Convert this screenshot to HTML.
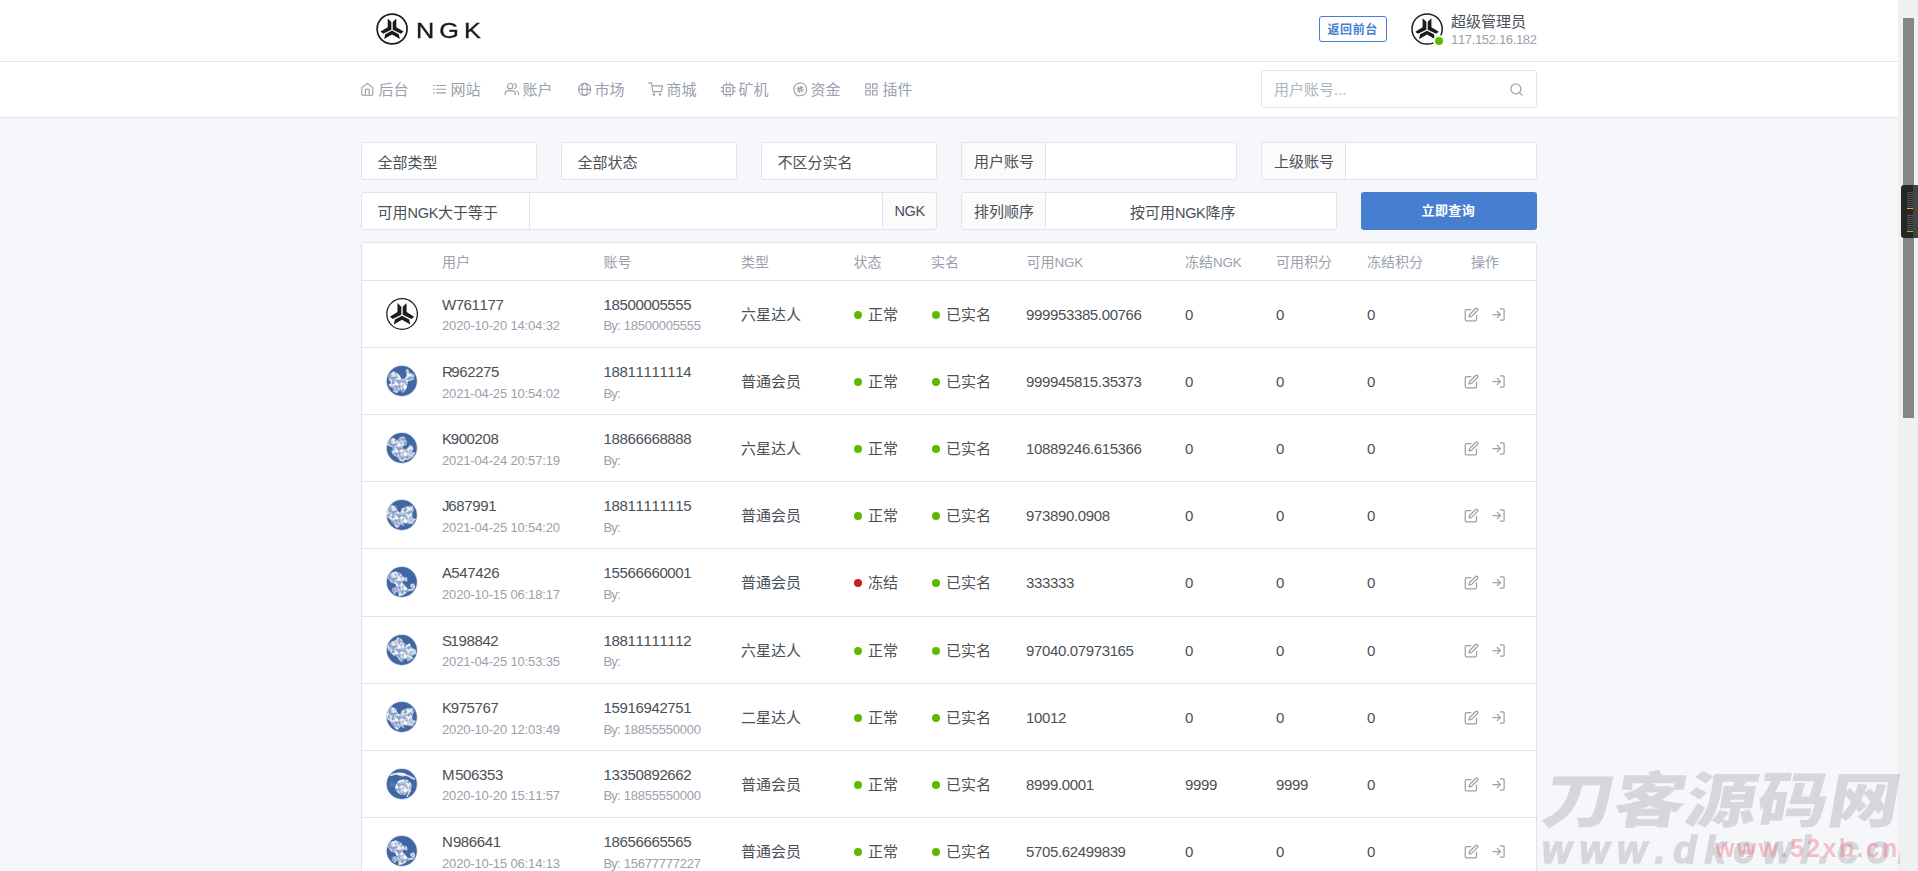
<!DOCTYPE html>
<html lang="zh-CN"><head><meta charset="utf-8"><title>NGK</title>
<style>
*{box-sizing:border-box;margin:0;padding:0}
html,body{width:1918px;height:871px;overflow:hidden}
body{position:relative;background:#f5f7fb;color:#495057;
 font-family:"Liberation Sans","Noto Sans CJK SC",sans-serif;font-size:15px;line-height:1;
 -webkit-font-smoothing:antialiased;font-kerning:none}
.abs,.t{position:absolute;white-space:nowrap}
.t{line-height:1}
.m{color:#9aa0ac}
#hdr{position:absolute;left:0;top:0;width:1898px;height:62px;background:#fff;border-bottom:1px solid #e0e5ec}
#nav{position:absolute;left:0;top:62px;width:1898px;height:56px;background:#fff;border-bottom:1px solid #e0e5ec}
.box{position:absolute;background:#fff;border:1px solid #e0e5ec;border-radius:3px}
.lab{position:absolute;background:#fbfbfc;border:1px solid #e0e5ec}
.ic{position:absolute;fill:none;stroke:#9aa0ac;stroke-width:1.6;stroke-linecap:round;stroke-linejoin:round;overflow:visible}
.ic.fe{stroke-width:2}
.ic.nvi{stroke-width:1.15}
.dot{position:absolute;width:8px;height:8px;border-radius:50%;background:#5eba00}
.dot.r{background:#cd201f}
.hl{position:absolute;left:362px;width:1174px;height:1px;background:#e0e5ec}
.l{font-size:14.5px;letter-spacing:-.35px}.l14{font-size:13.5px;letter-spacing:-.3px}.d{letter-spacing:-.36px}.d2{letter-spacing:-.23px}
</style></head>
<body>
<svg width="0" height="0" style="position:absolute"><defs><filter id="nz" x="0" y="0" width="100%" height="100%" color-interpolation-filters="sRGB"><feTurbulence type="fractalNoise" baseFrequency=".33" numOctaves="2" seed="7" result="n"/><feColorMatrix in="n" type="matrix" values="0 0 0 0 1  0 0 0 0 1  0 0 0 0 1  0 0 0 2.5 -0.82" result="a"/><feComposite in="a" in2="SourceGraphic" operator="in"/></filter></defs></svg>
<div id="hdr"></div>
<div id="nav"></div>
<svg class="abs" style="left:376px;top:13px" width="32" height="32" viewBox="0 0 32 32">
<circle cx="16.1" cy="16" r="14.95" fill="#fff" stroke="#1c1c1c" stroke-width="1.7"/>
<g fill="#1c1c1c" transform="translate(16.05 16) scale(1) translate(-16.05 -16)">
<path d="M11.7 5.5 L15.35 9 V16.8 L7.1 20.7 L4.5 18.6 L11.7 14.2 Z"/>
<path d="M20.35 5.5 L16.7 9 V16.8 L24.95 20.7 L27.55 18.6 L20.35 14.2 Z"/>
<path d="M16.02 17.6 L22.8 21.2 L23.9 26.1 L16.02 21.5 L8.15 26.1 L9.25 21.2 Z"/>
</g></svg>
<div class="t" id="brand" style="left:416px;top:19.5px;font-size:22.5px;color:#1a1a1a;-webkit-text-stroke:.35px #1a1a1a;letter-spacing:4.5px;transform:scaleX(1.12);transform-origin:0 0">NGK</div>
<div class="abs" style="left:1319px;top:16px;width:68px;height:26px;border:1px solid #467fcf;border-radius:3px;background:#fff"></div>
<div class="t " style="left:1327.5px;top:23.7px;font-size:12px;color:#467fcf;font-weight:700;letter-spacing:.6px">返回前台</div>
<svg class="abs" style="left:1411px;top:13px" width="32" height="32" viewBox="0 0 32 32">
<circle cx="16.1" cy="16" r="15.1" fill="#fff" stroke="#1c1c1c" stroke-width="1.5"/>
<g fill="#1c1c1c" transform="translate(16.05 16) scale(1.02) translate(-16.05 -16)">
<path d="M11.7 5.5 L15.35 9 V16.8 L7.1 20.7 L4.5 18.6 L11.7 14.2 Z"/>
<path d="M20.35 5.5 L16.7 9 V16.8 L24.95 20.7 L27.55 18.6 L20.35 14.2 Z"/>
<path d="M16.02 17.6 L22.8 21.2 L23.9 26.1 L16.02 21.5 L8.15 26.1 L9.25 21.2 Z"/>
</g></svg>
<div class="abs" style="left:1433px;top:35px;width:12px;height:12px;border-radius:50%;background:#5eba00;border:2px solid #fff"></div>
<div class="t " style="left:1451px;top:14px;font-size:15px;">超级管理员</div>
<div class="t m" style="left:1451px;top:33px;font-size:13px;letter-spacing:-.34px">117.152.16.182</div>
<svg class="ic nvi" style="left:360px;top:82px" width="16" height="15" viewBox="0 0 16 15"><path d="M1.8 5.6 L7.3 1.5 L12.8 5.6 V12.4 Q12.8 13.2 12 13.2 H2.6 Q1.8 13.2 1.8 12.4 Z"/><path d="M5.4 13 V7.4 H9.2 V13"/></svg>
<div class="t m" style="left:378.5px;top:82px;font-size:15px;">后台</div>
<svg class="ic nvi" style="left:432px;top:82px" width="16" height="15" viewBox="0 0 16 15"><path d="M4.8 3.5 H13.6 M4.8 7.2 H13.6 M4.8 10.8 H13.6"/><path d="M1.6 3.5 H2.4 M1.6 7.2 H2.4 M1.6 10.8 H2.4"/></svg>
<div class="t m" style="left:450.5px;top:82px;font-size:15px;">网站</div>
<svg class="ic nvi" style="left:504px;top:82px" width="16" height="15" viewBox="0 0 16 15"><circle cx="6.2" cy="4.2" r="2.7"/><path d="M1.2 12.6 V11.6 Q1.2 8.8 4 8.8 H8.4 Q11.2 8.8 11.2 11.6 V12.6"/><path d="M10.4 1.6 Q12.4 2.2 12.4 4.2 Q12.4 6.2 10.4 6.8"/><path d="M12.6 9 Q14.6 9.6 14.6 11.6 V12.6"/></svg>
<div class="t m" style="left:522.5px;top:82px;font-size:15px;">账户</div>
<svg class="ic nvi" style="left:576px;top:82px" width="16" height="15" viewBox="0 0 16 15"><circle cx="8.6" cy="7.4" r="6"/><path d="M2.6 7.4 H14.6"/><ellipse cx="8.6" cy="7.4" rx="2.6" ry="6"/></svg>
<div class="t m" style="left:594.5px;top:82px;font-size:15px;">市场</div>
<svg class="ic nvi" style="left:648px;top:82px" width="16" height="15" viewBox="0 0 16 15"><path d="M0.8 0.9 H2.9 Q3.5 0.9 3.6 1.5 L4.8 9.6 H13.2 L14.6 3.8 H4"/><circle cx="5.9" cy="12.4" r="0.7"/><circle cx="12.1" cy="12.4" r="0.7"/></svg>
<div class="t m" style="left:666.5px;top:82px;font-size:15px;">商城</div>
<svg class="ic nvi" style="left:720px;top:82px" width="16" height="15" viewBox="0 0 16 15"><rect x="3.4" y="2.8" width="9.6" height="9.6" rx="1"/><rect x="6.2" y="5.6" width="4" height="4"/><path d="M6.4 0.8 V2.8 M10 0.8 V2.8 M6.4 12.4 V14.4 M10 12.4 V14.4 M1.2 5.6 H3.4 M1.2 9.4 H3.4 M13 5.6 H15.2 M13 9.4 H15.2"/></svg>
<div class="t m" style="left:738.5px;top:82px;font-size:15px;">矿机</div>
<svg class="ic nvi" style="left:792px;top:82px" width="16" height="15" viewBox="0 0 16 15"><rect x="2" y="1.2" width="12.4" height="12.4" rx="5.3" transform="rotate(-12 8.2 7.4)"/><g transform="rotate(-12 8.2 7.4)"><path d="M7 4.4 V10.4 M9.4 4.4 V10.4 M5.2 6.2 H11.2 M5.2 8.6 H11.2"/></g></svg>
<div class="t m" style="left:810.5px;top:82px;font-size:15px;">资金</div>
<svg class="ic nvi" style="left:864px;top:82px" width="16" height="15" viewBox="0 0 16 15"><rect x="1.8" y="1.8" width="4.4" height="4.4"/><rect x="8.6" y="1.8" width="4.4" height="4.4"/><rect x="1.8" y="8.6" width="4.4" height="4.4"/><rect x="8.6" y="8.6" width="4.4" height="4.4"/></svg>
<div class="t m" style="left:882.5px;top:82px;font-size:15px;">插件</div>
<div class="box" style="left:1261px;top:70px;width:276px;height:38px"></div>
<div class="t " style="left:1274px;top:82px;font-size:15px;color:#adb5bd">用户账号...</div>
<svg class="ic fe" style="left:1509px;top:82px" width="15" height="15" viewBox="0 0 24 24"><circle cx="11" cy="11" r="8"/><path d="M21 21 L16.65 16.65"/></svg>
<div class="box" style="left:361px;top:142px;width:176px;height:38px;"></div>
<div class="t " style="left:377.6px;top:154.8px;font-size:15px;">全部类型</div>
<div class="box" style="left:561px;top:142px;width:176px;height:38px;"></div>
<div class="t " style="left:577.6px;top:154.8px;font-size:15px;">全部状态</div>
<div class="box" style="left:761px;top:142px;width:176px;height:38px;"></div>
<div class="t " style="left:777.6px;top:154.8px;font-size:15px;">不区分实名</div>
<div class="box" style="left:961px;top:142px;width:276px;height:38px;"></div>
<div class="lab" style="left:961px;top:142px;width:85px;height:38px;border-radius:3px 0 0 3px"></div>
<div class="t " style="left:974px;top:154px;font-size:15px;">用户账号</div>
<div class="box" style="left:1261px;top:142px;width:276px;height:38px;"></div>
<div class="lab" style="left:1261px;top:142px;width:85px;height:38px;border-radius:3px 0 0 3px"></div>
<div class="t " style="left:1274px;top:154px;font-size:15px;">上级账号</div>
<div class="box" style="left:361px;top:192px;width:576px;height:38px;"></div>
<div class="abs" style="left:529px;top:192px;width:1px;height:38px;background:#e0e5ec"></div>
<div class="t " style="left:377.6px;top:204.8px;font-size:15px;">可用<span class="l">NGK</span>大于等于</div>
<div class="lab" style="left:882px;top:192px;width:55px;height:38px;border-radius:0 3px 3px 0"></div>
<div class="t " style="left:894.5px;top:204.3px;font-size:14.5px;letter-spacing:-.35px">NGK</div>
<div class="box" style="left:961px;top:192px;width:376px;height:38px;"></div>
<div class="lab" style="left:961px;top:192px;width:85px;height:38px;border-radius:3px 0 0 3px"></div>
<div class="t " style="left:974px;top:204px;font-size:15px;">排列顺序</div>
<div class="t " style="left:1130px;top:205px;font-size:15px;">按可用<span class="l">NGK</span>降序</div>
<div class="abs" style="left:1361px;top:192px;width:176px;height:38px;background:#467fcf;border-radius:3px"></div>
<div class="t " style="left:1421.5px;top:204px;font-size:13px;color:#fff;font-weight:700;letter-spacing:.39px">立即查询</div>
<div class="box" style="left:361px;top:242px;width:1176px;height:700px;border-radius:3px 3px 0 0;box-shadow:0 1px 2px 0 rgba(0,0,0,.05)"></div>
<div class="t m" style="left:442px;top:254.5px;font-size:14px;">用户</div>
<div class="t m" style="left:603.5px;top:254.5px;font-size:14px;">账号</div>
<div class="t m" style="left:741px;top:254.5px;font-size:14px;">类型</div>
<div class="t m" style="left:853.5px;top:254.5px;font-size:14px;">状态</div>
<div class="t m" style="left:931px;top:254.5px;font-size:14px;">实名</div>
<div class="t m" style="left:1026.5px;top:254.5px;font-size:14px;">可用<span class="l14">NGK</span></div>
<div class="t m" style="left:1185px;top:254.5px;font-size:14px;">冻结<span class="l14">NGK</span></div>
<div class="t m" style="left:1276px;top:254.5px;font-size:14px;">可用积分</div>
<div class="t m" style="left:1367px;top:254.5px;font-size:14px;">冻结积分</div>
<div class="t m" style="left:1471px;top:254.5px;font-size:14px;">操作</div>
<div class="hl" style="top:280px"></div>
<div class="hl" style="top:347px"></div>
<div class="hl" style="top:414px"></div>
<div class="hl" style="top:481px"></div>
<div class="hl" style="top:548px"></div>
<div class="hl" style="top:616px"></div>
<div class="hl" style="top:683px"></div>
<div class="hl" style="top:750px"></div>
<div class="hl" style="top:817px"></div>
<svg class="abs" style="left:386px;top:298px" width="32" height="32" viewBox="0 0 32 32">
<circle cx="16.1" cy="16" r="15.3" fill="#fff" stroke="#1c1c1c" stroke-width="1.25"/>
<g fill="#1c1c1c" transform="translate(16.05 16) scale(1.05) translate(-16.05 -16)">
<path d="M11.7 5.5 L15.35 9 V16.8 L7.1 20.7 L4.5 18.6 L11.7 14.2 Z"/>
<path d="M20.35 5.5 L16.7 9 V16.8 L24.95 20.7 L27.55 18.6 L20.35 14.2 Z"/>
<path d="M16.02 17.6 L22.8 21.2 L23.9 26.1 L16.02 21.5 L8.15 26.1 L9.25 21.2 Z"/>
</g></svg>
<div class="t d" style="left:442px;top:297px;font-size:15px;"><span style="letter-spacing:-0.52px">W</span>761177</div>
<div class="t m" style="left:442px;top:319px;font-size:13px;letter-spacing:-.15px">2020-10-20 14:04:32</div>
<div class="t d" style="left:603.5px;top:297px;font-size:15px;">18500005555</div>
<div class="t m d2" style="left:603.5px;top:319px;font-size:13px;word-spacing:.5px"><span style="letter-spacing:-.8px">By:</span> 18500005555</div>
<div class="t " style="left:741px;top:307.4px;font-size:15px;">六星达人</div>
<div class="dot" style="left:854px;top:311px"></div>
<div class="t " style="left:868px;top:307.4px;font-size:15px;">正常</div>
<div class="dot" style="left:931.5px;top:311px"></div>
<div class="t " style="left:946px;top:307.4px;font-size:15px;">已实名</div>
<div class="t d" style="left:1026px;top:306.5px;font-size:15px;">999953385.00766</div>
<div class="t d" style="left:1185px;top:306.5px;font-size:15px;">0</div>
<div class="t d" style="left:1276px;top:306.5px;font-size:15px;">0</div>
<div class="t d" style="left:1367px;top:306.5px;font-size:15px;">0</div>
<svg class="ic fe" style="left:1463.5px;top:307.2px" width="15" height="15" viewBox="0 0 24 24"><path d="M11 4H4a2 2 0 0 0-2 2v14a2 2 0 0 0 2 2h14a2 2 0 0 0 2-2v-7"/><path d="M18.5 2.5a2.121 2.121 0 0 1 3 3L12 15l-4 1 1-4 9.5-9.5z"/></svg>
<svg class="ic fe" style="left:1490.7px;top:307.2px" width="15" height="15" viewBox="0 0 24 24"><path d="M15 3h4a2 2 0 0 1 2 2v14a2 2 0 0 1-2 2h-4"/><path d="M10 17l5-5-5-5"/><path d="M15 12H3"/></svg>
<svg class="abs" style="left:386px;top:365px" width="32" height="32" viewBox="0 0 32 32"><defs><clipPath id="c365"><circle cx="15.8" cy="16" r="15"/></clipPath></defs><circle cx="15.8" cy="16" r="15.7" fill="#c9d4e8"/><circle cx="15.8" cy="16" r="15" fill="#4066a4"/><g clip-path="url(#c365)"><path d="M2.9 9.8 L7.5 6.6 L13 9.3 L15.7 14.4 L19 13.5 L20.8 9.8 L19.9 5.2 L21.7 4.3 L23.6 7.9 L28.1 9.8 L27.7 14.4 L21.7 16.2 L20.8 21.7 L19.4 25.4 L16.2 27.7 L14.4 24.5 L11.2 27.7 L7.5 26.8 L7 23.6 L4.3 21.7 L2.9 19.9 L5.2 17.6 L2.9 14.4 Z" fill="#fff" fill-opacity=".36" stroke="#fff" stroke-opacity=".36" stroke-width=".8" stroke-linejoin="round"/><path d="M2.9 9.8 L7.5 6.6 L13 9.3 L15.7 14.4 L19 13.5 L20.8 9.8 L19.9 5.2 L21.7 4.3 L23.6 7.9 L28.1 9.8 L27.7 14.4 L21.7 16.2 L20.8 21.7 L19.4 25.4 L16.2 27.7 L14.4 24.5 L11.2 27.7 L7.5 26.8 L7 23.6 L4.3 21.7 L2.9 19.9 L5.2 17.6 L2.9 14.4 Z" fill="#fff" filter="url(#nz)"/></g></svg>
<div class="t d" style="left:442px;top:364px;font-size:15px;"><span style="letter-spacing:-1.66px">R</span>962275</div>
<div class="t m" style="left:442px;top:387px;font-size:13px;letter-spacing:-.15px">2021-04-25 10:54:02</div>
<div class="t d" style="left:603.5px;top:364px;font-size:15px;">18811111114</div>
<div class="t m d2" style="left:603.5px;top:387px;font-size:13px;word-spacing:.5px"><span style="letter-spacing:-.8px">By:</span> </div>
<div class="t " style="left:741px;top:374.4px;font-size:15px;">普通会员</div>
<div class="dot" style="left:854px;top:378px"></div>
<div class="t " style="left:868px;top:374.4px;font-size:15px;">正常</div>
<div class="dot" style="left:931.5px;top:378px"></div>
<div class="t " style="left:946px;top:374.4px;font-size:15px;">已实名</div>
<div class="t d" style="left:1026px;top:373.5px;font-size:15px;">999945815.35373</div>
<div class="t d" style="left:1185px;top:373.5px;font-size:15px;">0</div>
<div class="t d" style="left:1276px;top:373.5px;font-size:15px;">0</div>
<div class="t d" style="left:1367px;top:373.5px;font-size:15px;">0</div>
<svg class="ic fe" style="left:1463.5px;top:374.2px" width="15" height="15" viewBox="0 0 24 24"><path d="M11 4H4a2 2 0 0 0-2 2v14a2 2 0 0 0 2 2h14a2 2 0 0 0 2-2v-7"/><path d="M18.5 2.5a2.121 2.121 0 0 1 3 3L12 15l-4 1 1-4 9.5-9.5z"/></svg>
<svg class="ic fe" style="left:1490.7px;top:374.2px" width="15" height="15" viewBox="0 0 24 24"><path d="M15 3h4a2 2 0 0 1 2 2v14a2 2 0 0 1-2 2h-4"/><path d="M10 17l5-5-5-5"/><path d="M15 12H3"/></svg>
<svg class="abs" style="left:386px;top:432px" width="32" height="32" viewBox="0 0 32 32"><defs><clipPath id="c432"><circle cx="15.8" cy="16" r="15"/></clipPath></defs><circle cx="15.8" cy="16" r="15.7" fill="#c9d4e8"/><circle cx="15.8" cy="16" r="15" fill="#4066a4"/><g clip-path="url(#c432)"><path d="M1.05 13 L3.3 7.9 L7.5 6.1 L11.2 8.9 L13.9 5.2 L18 4.7 L20.8 9.8 L19.9 13 L17.1 13.5 L16.2 16.2 L19.9 17.6 L21.7 16.2 L23.6 13 L26.3 13.9 L27.2 17.1 L25.4 19.9 L29.1 20.8 L28.1 24.5 L21.7 27.7 L19 27.2 L17.1 30 L13.5 28.1 L11.6 25.4 L7 22.6 L5.6 19 L7.5 15.7 L4.3 14.4 Z" fill="#fff" fill-opacity=".36" stroke="#fff" stroke-opacity=".36" stroke-width=".8" stroke-linejoin="round"/><path d="M1.05 13 L3.3 7.9 L7.5 6.1 L11.2 8.9 L13.9 5.2 L18 4.7 L20.8 9.8 L19.9 13 L17.1 13.5 L16.2 16.2 L19.9 17.6 L21.7 16.2 L23.6 13 L26.3 13.9 L27.2 17.1 L25.4 19.9 L29.1 20.8 L28.1 24.5 L21.7 27.7 L19 27.2 L17.1 30 L13.5 28.1 L11.6 25.4 L7 22.6 L5.6 19 L7.5 15.7 L4.3 14.4 Z" fill="#fff" filter="url(#nz)"/></g></svg>
<div class="t d" style="left:442px;top:431px;font-size:15px;"><span style="letter-spacing:-1.36px">K</span>900208</div>
<div class="t m" style="left:442px;top:454px;font-size:13px;letter-spacing:-.15px">2021-04-24 20:57:19</div>
<div class="t d" style="left:603.5px;top:431px;font-size:15px;">18866668888</div>
<div class="t m d2" style="left:603.5px;top:454px;font-size:13px;word-spacing:.5px"><span style="letter-spacing:-.8px">By:</span> </div>
<div class="t " style="left:741px;top:441.4px;font-size:15px;">六星达人</div>
<div class="dot" style="left:854px;top:445px"></div>
<div class="t " style="left:868px;top:441.4px;font-size:15px;">正常</div>
<div class="dot" style="left:931.5px;top:445px"></div>
<div class="t " style="left:946px;top:441.4px;font-size:15px;">已实名</div>
<div class="t d" style="left:1026px;top:440.5px;font-size:15px;">10889246.615366</div>
<div class="t d" style="left:1185px;top:440.5px;font-size:15px;">0</div>
<div class="t d" style="left:1276px;top:440.5px;font-size:15px;">0</div>
<div class="t d" style="left:1367px;top:440.5px;font-size:15px;">0</div>
<svg class="ic fe" style="left:1463.5px;top:441.2px" width="15" height="15" viewBox="0 0 24 24"><path d="M11 4H4a2 2 0 0 0-2 2v14a2 2 0 0 0 2 2h14a2 2 0 0 0 2-2v-7"/><path d="M18.5 2.5a2.121 2.121 0 0 1 3 3L12 15l-4 1 1-4 9.5-9.5z"/></svg>
<svg class="ic fe" style="left:1490.7px;top:441.2px" width="15" height="15" viewBox="0 0 24 24"><path d="M15 3h4a2 2 0 0 1 2 2v14a2 2 0 0 1-2 2h-4"/><path d="M10 17l5-5-5-5"/><path d="M15 12H3"/></svg>
<svg class="abs" style="left:386px;top:499px" width="32" height="32" viewBox="0 0 32 32"><defs><clipPath id="c499"><circle cx="15.8" cy="16" r="15"/></clipPath></defs><circle cx="15.8" cy="16" r="15.7" fill="#c9d4e8"/><circle cx="15.8" cy="16" r="15" fill="#4066a4"/><g clip-path="url(#c499)"><path d="M0.4 14.4 L2 8.9 L5.2 6.3 L9.8 7.5 L11.2 11.6 L14.4 14.4 L15.7 9.8 L20.8 7.5 L26.3 7 L27.7 10.7 L25.9 15.3 L26.3 19 L30 20.3 L28.1 22.2 L27.2 24.9 L21.7 24.5 L17.6 23.6 L18 26.8 L14.4 25.4 L11.6 29.1 L9.8 27.7 L6.1 23.6 L4.3 19.9 L1.05 17.6 Z" fill="#fff" fill-opacity=".36" stroke="#fff" stroke-opacity=".36" stroke-width=".8" stroke-linejoin="round"/><path d="M0.4 14.4 L2 8.9 L5.2 6.3 L9.8 7.5 L11.2 11.6 L14.4 14.4 L15.7 9.8 L20.8 7.5 L26.3 7 L27.7 10.7 L25.9 15.3 L26.3 19 L30 20.3 L28.1 22.2 L27.2 24.9 L21.7 24.5 L17.6 23.6 L18 26.8 L14.4 25.4 L11.6 29.1 L9.8 27.7 L6.1 23.6 L4.3 19.9 L1.05 17.6 Z" fill="#fff" filter="url(#nz)"/></g></svg>
<div class="t d" style="left:442px;top:498px;font-size:15px;"><span style="letter-spacing:-1.26px">J</span>687991</div>
<div class="t m" style="left:442px;top:521px;font-size:13px;letter-spacing:-.15px">2021-04-25 10:54:20</div>
<div class="t d" style="left:603.5px;top:498px;font-size:15px;">18811111115</div>
<div class="t m d2" style="left:603.5px;top:521px;font-size:13px;word-spacing:.5px"><span style="letter-spacing:-.8px">By:</span> </div>
<div class="t " style="left:741px;top:508.4px;font-size:15px;">普通会员</div>
<div class="dot" style="left:854px;top:512px"></div>
<div class="t " style="left:868px;top:508.4px;font-size:15px;">正常</div>
<div class="dot" style="left:931.5px;top:512px"></div>
<div class="t " style="left:946px;top:508.4px;font-size:15px;">已实名</div>
<div class="t d" style="left:1026px;top:507.5px;font-size:15px;">973890.0908</div>
<div class="t d" style="left:1185px;top:507.5px;font-size:15px;">0</div>
<div class="t d" style="left:1276px;top:507.5px;font-size:15px;">0</div>
<div class="t d" style="left:1367px;top:507.5px;font-size:15px;">0</div>
<svg class="ic fe" style="left:1463.5px;top:508.2px" width="15" height="15" viewBox="0 0 24 24"><path d="M11 4H4a2 2 0 0 0-2 2v14a2 2 0 0 0 2 2h14a2 2 0 0 0 2-2v-7"/><path d="M18.5 2.5a2.121 2.121 0 0 1 3 3L12 15l-4 1 1-4 9.5-9.5z"/></svg>
<svg class="ic fe" style="left:1490.7px;top:508.2px" width="15" height="15" viewBox="0 0 24 24"><path d="M15 3h4a2 2 0 0 1 2 2v14a2 2 0 0 1-2 2h-4"/><path d="M10 17l5-5-5-5"/><path d="M15 12H3"/></svg>
<svg class="abs" style="left:386px;top:566px" width="32" height="32" viewBox="0 0 32 32"><defs><clipPath id="c566"><circle cx="15.8" cy="16" r="15"/></clipPath></defs><circle cx="15.8" cy="16" r="15.7" fill="#c9d4e8"/><circle cx="15.8" cy="16" r="15" fill="#4066a4"/><g clip-path="url(#c566)"><path d="M2 12.1 L3.8 7.5 L9.8 5.6 L15.3 7.9 L16.2 10.7 L20.8 11.6 L21.3 15.3 L17.6 14.4 L16.2 16.2 L19 19.9 L21.7 23.1 L27.2 23.1 L24.5 20.8 L24.5 18.5 L27.7 17.6 L29.1 20.3 L28.1 24 L21.7 25.4 L17.1 29.1 L13 30 L12.5 26.3 L9.8 25.4 L8.9 28.1 L6.1 25.4 L6.1 22.6 L10.7 20.8 L9.8 18 L5.2 16.2 Z" fill="#fff" fill-opacity=".36" stroke="#fff" stroke-opacity=".36" stroke-width=".8" stroke-linejoin="round"/><path d="M2 12.1 L3.8 7.5 L9.8 5.6 L15.3 7.9 L16.2 10.7 L20.8 11.6 L21.3 15.3 L17.6 14.4 L16.2 16.2 L19 19.9 L21.7 23.1 L27.2 23.1 L24.5 20.8 L24.5 18.5 L27.7 17.6 L29.1 20.3 L28.1 24 L21.7 25.4 L17.1 29.1 L13 30 L12.5 26.3 L9.8 25.4 L8.9 28.1 L6.1 25.4 L6.1 22.6 L10.7 20.8 L9.8 18 L5.2 16.2 Z" fill="#fff" filter="url(#nz)"/></g></svg>
<div class="t d" style="left:442px;top:565px;font-size:15px;"><span style="letter-spacing:-0.69px">A</span>547426</div>
<div class="t m" style="left:442px;top:588px;font-size:13px;letter-spacing:-.15px">2020-10-15 06:18:17</div>
<div class="t d" style="left:603.5px;top:565px;font-size:15px;">15566660001</div>
<div class="t m d2" style="left:603.5px;top:588px;font-size:13px;word-spacing:.5px"><span style="letter-spacing:-.8px">By:</span> </div>
<div class="t " style="left:741px;top:575.4px;font-size:15px;">普通会员</div>
<div class="dot r" style="left:854px;top:579px"></div>
<div class="t " style="left:868px;top:575.4px;font-size:15px;">冻结</div>
<div class="dot" style="left:931.5px;top:579px"></div>
<div class="t " style="left:946px;top:575.4px;font-size:15px;">已实名</div>
<div class="t d" style="left:1026px;top:574.5px;font-size:15px;">333333</div>
<div class="t d" style="left:1185px;top:574.5px;font-size:15px;">0</div>
<div class="t d" style="left:1276px;top:574.5px;font-size:15px;">0</div>
<div class="t d" style="left:1367px;top:574.5px;font-size:15px;">0</div>
<svg class="ic fe" style="left:1463.5px;top:575.2px" width="15" height="15" viewBox="0 0 24 24"><path d="M11 4H4a2 2 0 0 0-2 2v14a2 2 0 0 0 2 2h14a2 2 0 0 0 2-2v-7"/><path d="M18.5 2.5a2.121 2.121 0 0 1 3 3L12 15l-4 1 1-4 9.5-9.5z"/></svg>
<svg class="ic fe" style="left:1490.7px;top:575.2px" width="15" height="15" viewBox="0 0 24 24"><path d="M15 3h4a2 2 0 0 1 2 2v14a2 2 0 0 1-2 2h-4"/><path d="M10 17l5-5-5-5"/><path d="M15 12H3"/></svg>
<svg class="abs" style="left:386px;top:634px" width="32" height="32" viewBox="0 0 32 32"><defs><clipPath id="c634"><circle cx="15.8" cy="16" r="15"/></clipPath></defs><circle cx="15.8" cy="16" r="15.7" fill="#c9d4e8"/><circle cx="15.8" cy="16" r="15" fill="#4066a4"/><g clip-path="url(#c634)"><path d="M1.5 11.6 L5.2 7.9 L9.8 6.6 L11.6 3.3 L15.7 5.2 L17.6 9.3 L20.8 11.2 L23.6 9.3 L25.4 13.5 L30 16.2 L29.5 19.9 L25.4 21.7 L27.2 24.5 L21.7 27.2 L20.8 24.5 L17.1 25.4 L16.2 28.1 L13.5 26.3 L11.2 22.6 L6.6 20.8 L4.3 17.6 L2 16.2 Z" fill="#fff" fill-opacity=".36" stroke="#fff" stroke-opacity=".36" stroke-width=".8" stroke-linejoin="round"/><path d="M1.5 11.6 L5.2 7.9 L9.8 6.6 L11.6 3.3 L15.7 5.2 L17.6 9.3 L20.8 11.2 L23.6 9.3 L25.4 13.5 L30 16.2 L29.5 19.9 L25.4 21.7 L27.2 24.5 L21.7 27.2 L20.8 24.5 L17.1 25.4 L16.2 28.1 L13.5 26.3 L11.2 22.6 L6.6 20.8 L4.3 17.6 L2 16.2 Z" fill="#fff" filter="url(#nz)"/></g></svg>
<div class="t d" style="left:442px;top:633px;font-size:15px;"><span style="letter-spacing:-1.56px">S</span>198842</div>
<div class="t m" style="left:442px;top:655px;font-size:13px;letter-spacing:-.15px">2021-04-25 10:53:35</div>
<div class="t d" style="left:603.5px;top:633px;font-size:15px;">18811111112</div>
<div class="t m d2" style="left:603.5px;top:655px;font-size:13px;word-spacing:.5px"><span style="letter-spacing:-.8px">By:</span> </div>
<div class="t " style="left:741px;top:643.4px;font-size:15px;">六星达人</div>
<div class="dot" style="left:854px;top:647px"></div>
<div class="t " style="left:868px;top:643.4px;font-size:15px;">正常</div>
<div class="dot" style="left:931.5px;top:647px"></div>
<div class="t " style="left:946px;top:643.4px;font-size:15px;">已实名</div>
<div class="t d" style="left:1026px;top:642.5px;font-size:15px;">97040.07973165</div>
<div class="t d" style="left:1185px;top:642.5px;font-size:15px;">0</div>
<div class="t d" style="left:1276px;top:642.5px;font-size:15px;">0</div>
<div class="t d" style="left:1367px;top:642.5px;font-size:15px;">0</div>
<svg class="ic fe" style="left:1463.5px;top:643.2px" width="15" height="15" viewBox="0 0 24 24"><path d="M11 4H4a2 2 0 0 0-2 2v14a2 2 0 0 0 2 2h14a2 2 0 0 0 2-2v-7"/><path d="M18.5 2.5a2.121 2.121 0 0 1 3 3L12 15l-4 1 1-4 9.5-9.5z"/></svg>
<svg class="ic fe" style="left:1490.7px;top:643.2px" width="15" height="15" viewBox="0 0 24 24"><path d="M15 3h4a2 2 0 0 1 2 2v14a2 2 0 0 1-2 2h-4"/><path d="M10 17l5-5-5-5"/><path d="M15 12H3"/></svg>
<svg class="abs" style="left:386px;top:701px" width="32" height="32" viewBox="0 0 32 32"><defs><clipPath id="c701"><circle cx="15.8" cy="16" r="15"/></clipPath></defs><circle cx="15.8" cy="16" r="15.7" fill="#c9d4e8"/><circle cx="15.8" cy="16" r="15" fill="#4066a4"/><g clip-path="url(#c701)"><path d="M0.4 14.4 L2 8.9 L5.2 6.3 L9.8 7.5 L11.2 11.6 L14.4 14.4 L15.7 9.8 L20.8 7.5 L26.3 7 L27.7 10.7 L25.9 15.3 L26.3 19 L30 20.3 L28.1 22.2 L27.2 24.9 L21.7 24.5 L17.6 23.6 L18 26.8 L14.4 25.4 L11.6 29.1 L9.8 27.7 L6.1 23.6 L4.3 19.9 L1.05 17.6 Z" fill="#fff" fill-opacity=".36" stroke="#fff" stroke-opacity=".36" stroke-width=".8" stroke-linejoin="round"/><path d="M0.4 14.4 L2 8.9 L5.2 6.3 L9.8 7.5 L11.2 11.6 L14.4 14.4 L15.7 9.8 L20.8 7.5 L26.3 7 L27.7 10.7 L25.9 15.3 L26.3 19 L30 20.3 L28.1 22.2 L27.2 24.9 L21.7 24.5 L17.6 23.6 L18 26.8 L14.4 25.4 L11.6 29.1 L9.8 27.7 L6.1 23.6 L4.3 19.9 L1.05 17.6 Z" fill="#fff" filter="url(#nz)"/></g></svg>
<div class="t d" style="left:442px;top:700px;font-size:15px;"><span style="letter-spacing:-1.36px">K</span>975767</div>
<div class="t m" style="left:442px;top:723px;font-size:13px;letter-spacing:-.15px">2020-10-20 12:03:49</div>
<div class="t d" style="left:603.5px;top:700px;font-size:15px;">15916942751</div>
<div class="t m d2" style="left:603.5px;top:723px;font-size:13px;word-spacing:.5px"><span style="letter-spacing:-.8px">By:</span> 18855550000</div>
<div class="t " style="left:741px;top:710.4px;font-size:15px;">二星达人</div>
<div class="dot" style="left:854px;top:714px"></div>
<div class="t " style="left:868px;top:710.4px;font-size:15px;">正常</div>
<div class="dot" style="left:931.5px;top:714px"></div>
<div class="t " style="left:946px;top:710.4px;font-size:15px;">已实名</div>
<div class="t d" style="left:1026px;top:709.5px;font-size:15px;">10012</div>
<div class="t d" style="left:1185px;top:709.5px;font-size:15px;">0</div>
<div class="t d" style="left:1276px;top:709.5px;font-size:15px;">0</div>
<div class="t d" style="left:1367px;top:709.5px;font-size:15px;">0</div>
<svg class="ic fe" style="left:1463.5px;top:710.2px" width="15" height="15" viewBox="0 0 24 24"><path d="M11 4H4a2 2 0 0 0-2 2v14a2 2 0 0 0 2 2h14a2 2 0 0 0 2-2v-7"/><path d="M18.5 2.5a2.121 2.121 0 0 1 3 3L12 15l-4 1 1-4 9.5-9.5z"/></svg>
<svg class="ic fe" style="left:1490.7px;top:710.2px" width="15" height="15" viewBox="0 0 24 24"><path d="M15 3h4a2 2 0 0 1 2 2v14a2 2 0 0 1-2 2h-4"/><path d="M10 17l5-5-5-5"/><path d="M15 12H3"/></svg>
<svg class="abs" style="left:386px;top:768px" width="32" height="32" viewBox="0 0 32 32"><defs><clipPath id="c768"><circle cx="15.8" cy="16" r="15"/></clipPath></defs><circle cx="15.8" cy="16" r="15.7" fill="#c9d4e8"/><circle cx="15.8" cy="16" r="15" fill="#4066a4"/><g clip-path="url(#c768)"><ellipse cx="17.4" cy="19" rx="8.4" ry="7.6" fill="#fff" fill-opacity=".4" transform="rotate(-25 17.4 19)"/><g filter="url(#nz)"><ellipse cx="17.4" cy="19" rx="8.4" ry="7.6" fill="#fff" transform="rotate(-25 17.4 19)"/></g><path d="M5 7.2 C9 5.4 14 5 19 6.6 C23 8 26 9.6 28 10.8" fill="none" stroke="#fff" stroke-opacity=".8" stroke-width="2" stroke-linecap="round"/><path d="M21 28.4 L24.6 22.4" fill="none" stroke="#fff" stroke-opacity=".8" stroke-width="1.3" stroke-linecap="round"/><ellipse cx="6" cy="16" rx="3" ry="2.6" fill="#fff" fill-opacity=".12"/><ellipse cx="15.6" cy="6.6" rx="4.6" ry="1.7" fill="#fff" fill-opacity=".75" transform="rotate(6 15.6 6.6)"/></g></svg>
<div class="t d" style="left:442px;top:767px;font-size:15px;"><span style="letter-spacing:0.64px">M</span>506353</div>
<div class="t m" style="left:442px;top:789px;font-size:13px;letter-spacing:-.15px">2020-10-20 15:11:57</div>
<div class="t d" style="left:603.5px;top:767px;font-size:15px;">13350892662</div>
<div class="t m d2" style="left:603.5px;top:789px;font-size:13px;word-spacing:.5px"><span style="letter-spacing:-.8px">By:</span> 18855550000</div>
<div class="t " style="left:741px;top:777.4px;font-size:15px;">普通会员</div>
<div class="dot" style="left:854px;top:781px"></div>
<div class="t " style="left:868px;top:777.4px;font-size:15px;">正常</div>
<div class="dot" style="left:931.5px;top:781px"></div>
<div class="t " style="left:946px;top:777.4px;font-size:15px;">已实名</div>
<div class="t d" style="left:1026px;top:776.5px;font-size:15px;">8999.0001</div>
<div class="t d" style="left:1185px;top:776.5px;font-size:15px;">9999</div>
<div class="t d" style="left:1276px;top:776.5px;font-size:15px;">9999</div>
<div class="t d" style="left:1367px;top:776.5px;font-size:15px;">0</div>
<svg class="ic fe" style="left:1463.5px;top:777.2px" width="15" height="15" viewBox="0 0 24 24"><path d="M11 4H4a2 2 0 0 0-2 2v14a2 2 0 0 0 2 2h14a2 2 0 0 0 2-2v-7"/><path d="M18.5 2.5a2.121 2.121 0 0 1 3 3L12 15l-4 1 1-4 9.5-9.5z"/></svg>
<svg class="ic fe" style="left:1490.7px;top:777.2px" width="15" height="15" viewBox="0 0 24 24"><path d="M15 3h4a2 2 0 0 1 2 2v14a2 2 0 0 1-2 2h-4"/><path d="M10 17l5-5-5-5"/><path d="M15 12H3"/></svg>
<svg class="abs" style="left:386px;top:835px" width="32" height="32" viewBox="0 0 32 32"><defs><clipPath id="c835"><circle cx="15.8" cy="16" r="15"/></clipPath></defs><circle cx="15.8" cy="16" r="15.7" fill="#c9d4e8"/><circle cx="15.8" cy="16" r="15" fill="#4066a4"/><g clip-path="url(#c835)"><path d="M2 12.1 L3.8 7.5 L9.8 5.6 L15.3 7.9 L16.2 10.7 L20.8 11.6 L21.3 15.3 L17.6 14.4 L16.2 16.2 L19 19.9 L21.7 23.1 L27.2 23.1 L24.5 20.8 L24.5 18.5 L27.7 17.6 L29.1 20.3 L28.1 24 L21.7 25.4 L17.1 29.1 L13 30 L12.5 26.3 L9.8 25.4 L8.9 28.1 L6.1 25.4 L6.1 22.6 L10.7 20.8 L9.8 18 L5.2 16.2 Z" fill="#fff" fill-opacity=".36" stroke="#fff" stroke-opacity=".36" stroke-width=".8" stroke-linejoin="round"/><path d="M2 12.1 L3.8 7.5 L9.8 5.6 L15.3 7.9 L16.2 10.7 L20.8 11.6 L21.3 15.3 L17.6 14.4 L16.2 16.2 L19 19.9 L21.7 23.1 L27.2 23.1 L24.5 20.8 L24.5 18.5 L27.7 17.6 L29.1 20.3 L28.1 24 L21.7 25.4 L17.1 29.1 L13 30 L12.5 26.3 L9.8 25.4 L8.9 28.1 L6.1 25.4 L6.1 22.6 L10.7 20.8 L9.8 18 L5.2 16.2 Z" fill="#fff" filter="url(#nz)"/></g></svg>
<div class="t d" style="left:442px;top:834px;font-size:15px;"><span style="letter-spacing:0.04px">N</span>986641</div>
<div class="t m" style="left:442px;top:857px;font-size:13px;letter-spacing:-.15px">2020-10-15 06:14:13</div>
<div class="t d" style="left:603.5px;top:834px;font-size:15px;">18656665565</div>
<div class="t m d2" style="left:603.5px;top:857px;font-size:13px;word-spacing:.5px"><span style="letter-spacing:-.8px">By:</span> 15677777227</div>
<div class="t " style="left:741px;top:844.4px;font-size:15px;">普通会员</div>
<div class="dot" style="left:854px;top:848px"></div>
<div class="t " style="left:868px;top:844.4px;font-size:15px;">正常</div>
<div class="dot" style="left:931.5px;top:848px"></div>
<div class="t " style="left:946px;top:844.4px;font-size:15px;">已实名</div>
<div class="t d" style="left:1026px;top:843.5px;font-size:15px;">5705.62499839</div>
<div class="t d" style="left:1185px;top:843.5px;font-size:15px;">0</div>
<div class="t d" style="left:1276px;top:843.5px;font-size:15px;">0</div>
<div class="t d" style="left:1367px;top:843.5px;font-size:15px;">0</div>
<svg class="ic fe" style="left:1463.5px;top:844.2px" width="15" height="15" viewBox="0 0 24 24"><path d="M11 4H4a2 2 0 0 0-2 2v14a2 2 0 0 0 2 2h14a2 2 0 0 0 2-2v-7"/><path d="M18.5 2.5a2.121 2.121 0 0 1 3 3L12 15l-4 1 1-4 9.5-9.5z"/></svg>
<svg class="ic fe" style="left:1490.7px;top:844.2px" width="15" height="15" viewBox="0 0 24 24"><path d="M15 3h4a2 2 0 0 1 2 2v14a2 2 0 0 1-2 2h-4"/><path d="M10 17l5-5-5-5"/><path d="M15 12H3"/></svg>
<div class="abs" style="left:1898px;top:0;width:20px;height:871px;background:#f0f0f0"></div>
<div class="abs" style="left:1903px;top:18px;width:11px;height:400px;background:#868686"></div>
<div class="abs" id="wm" style="left:1537px;top:760px;width:363px;height:111px;overflow:hidden"><div class="abs" style="left:0;top:0;width:363px;height:111px;opacity:.225"><div class="t" id="wm1" style="left:1px;top:12px;font-size:60px;font-weight:900;color:#6a6c78;transform:skewX(-10deg) scaleX(1.19);transform-origin:0 100%">刀客源码网</div><div class="t" id="wm2" style="left:5px;top:71px;font-size:38px;font-weight:700;font-style:italic;color:#6a6c78;-webkit-text-stroke:1.6px #6a6c78;letter-spacing:8px">www.dkewl.com</div></div><div class="t" id="wm3" style="left:178px;top:76px;font-size:25px;font-weight:700;color:#ee5a66;opacity:.34;letter-spacing:2.4px">www.52xb.cn</div></div>
<div class="abs" style="left:1901px;top:185px;width:17px;height:53px;background:#262626;border-radius:3px 0 0 3px;overflow:hidden"><div class="abs" style="left:12px;top:0;width:5px;height:53px;background:#444"></div><div class="abs" style="left:6px;top:7px;width:6px;height:1px;background:#555"></div><div class="abs" style="left:6px;top:9px;width:6px;height:1px;background:#555"></div><div class="abs" style="left:6px;top:11px;width:6px;height:1px;background:#555"></div><div class="abs" style="left:6px;top:13px;width:6px;height:1px;background:#555"></div><div class="abs" style="left:6px;top:15px;width:6px;height:1px;background:#555"></div><div class="abs" style="left:6px;top:17px;width:6px;height:1px;background:#555"></div><div class="abs" style="left:6px;top:19px;width:6px;height:1px;background:#555"></div><div class="abs" style="left:6px;top:21px;width:6px;height:1px;background:#555"></div><div class="abs" style="left:6px;top:23px;width:6px;height:1px;background:#f5a623"></div><div class="abs" style="left:6px;top:30px;width:6px;height:1px;background:#555"></div><div class="abs" style="left:6px;top:32px;width:6px;height:1px;background:#555"></div><div class="abs" style="left:6px;top:34px;width:6px;height:1px;background:#555"></div><div class="abs" style="left:6px;top:36px;width:6px;height:1px;background:#555"></div><div class="abs" style="left:6px;top:38px;width:6px;height:1px;background:#555"></div><div class="abs" style="left:6px;top:40px;width:6px;height:1px;background:#555"></div><div class="abs" style="left:6px;top:42px;width:6px;height:1px;background:#555"></div><div class="abs" style="left:6px;top:44px;width:6px;height:1px;background:#555"></div><div class="abs" style="left:6px;top:46px;width:6px;height:1px;background:#7ed321"></div></div>
</body></html>
